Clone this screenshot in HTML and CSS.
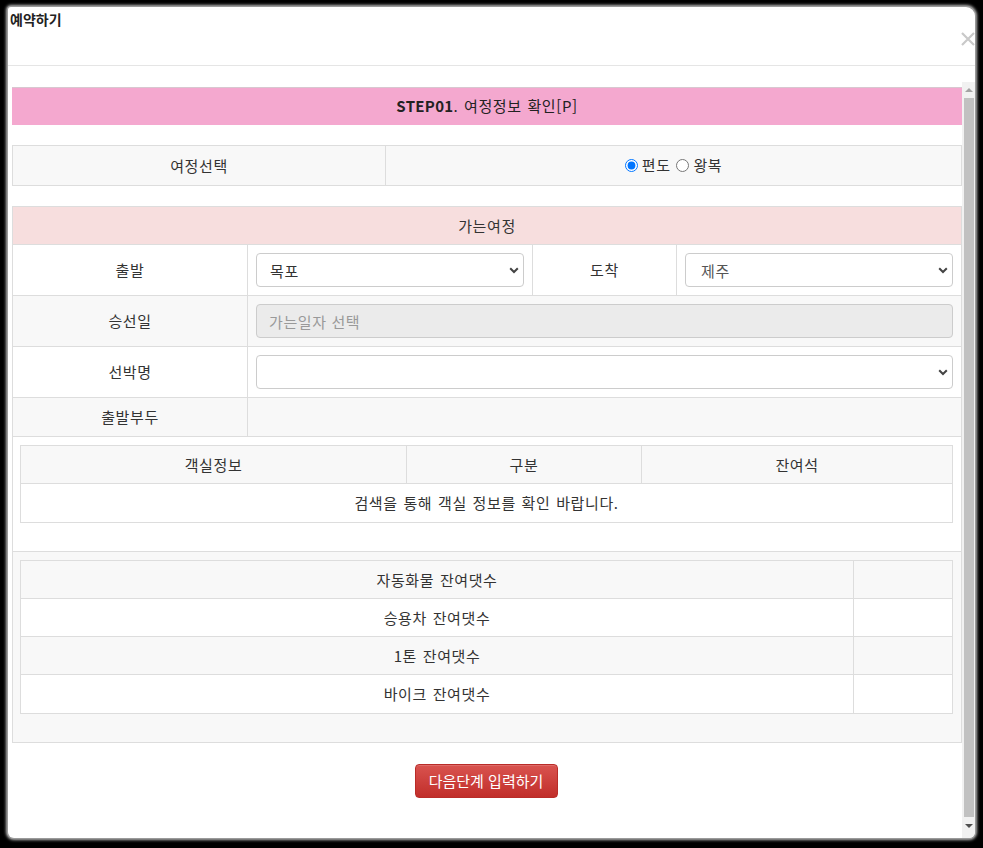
FILE: index.html
```html
<!DOCTYPE html>
<html lang="ko">
<head>
<meta charset="utf-8">
<title>예약하기</title>
<link rel="stylesheet" href="styles.css">
</head>
<body>
<div class="modal">
  <div class="modal-header">
    <h4 class="modal-title">예약하기</h4>
    <span class="close" aria-label="닫기">
      <svg width="16" height="16" viewBox="0 0 16 16"><path d="M2 2 L14 14 M14 2 L2 14" stroke="#c9c9c9" stroke-width="2.2" fill="none"/></svg>
    </span>
  </div>
  <div class="modal-body">
    <div class="content">
      <div class="step"><b>STEP01</b>. 여정정보 확인[P]</div>

      <table class="tbl tbl-type">
        <colgroup><col class="c-type-l"><col></colgroup>
        <tr>
          <td>여정선택</td>
          <td>
            <label class="radio"><input type="radio" name="trip" checked> 편도</label>
            <label class="radio"><input type="radio" name="trip"> 왕복</label>
          </td>
        </tr>
      </table>

      <table class="tbl tbl-main">
        <colgroup><col class="c1"><col class="c2"><col class="c3"><col class="c4"></colgroup>
        <tr class="r-head"><td colspan="4">가는여정</td></tr>
        <tr class="r-form">
          <td>출발</td>
          <td class="fcell"><span class="sel"><select><option>목포</option></select><svg class="chev" width="10" height="7" viewBox="0 0 10 7"><path d="M1.2 1.2 L5 5 L8.8 1.2" stroke="#444" stroke-width="2" fill="none"/></svg></span></td>
          <td>도착</td>
          <td class="fcell"><span class="sel"><select class="sel-gray"><option>제주</option></select><svg class="chev" width="10" height="7" viewBox="0 0 10 7"><path d="M1.2 1.2 L5 5 L8.8 1.2" stroke="#444" stroke-width="2" fill="none"/></svg></span></td>
        </tr>
        <tr class="r-form alt">
          <td>승선일</td>
          <td colspan="3" class="fcell"><input class="inp" type="text" placeholder="가는일자 선택" disabled></td>
        </tr>
        <tr class="r-form">
          <td>선박명</td>
          <td colspan="3" class="fcell"><span class="sel"><select><option></option></select><svg class="chev" width="10" height="7" viewBox="0 0 10 7"><path d="M1.2 1.2 L5 5 L8.8 1.2" stroke="#444" stroke-width="2" fill="none"/></svg></span></td>
        </tr>
        <tr class="r-port alt">
          <td>출발부두</td>
          <td colspan="3"></td>
        </tr>
        <tr class="r-nest">
          <td colspan="4" class="nest">
            <table class="tbl tbl-room">
              <colgroup><col class="n1"><col class="n2"><col></colgroup>
              <tr class="alt"><td>객실정보</td><td>구분</td><td>잔여석</td></tr>
              <tr class="r-msg"><td colspan="3">검색을 통해 객실 정보를 확인 바랍니다.</td></tr>
            </table>
          </td>
        </tr>
        <tr class="r-nest alt">
          <td colspan="4" class="nest">
            <table class="tbl tbl-car">
              <colgroup><col><col class="v1"></colgroup>
              <tr class="alt"><td>자동화물 잔여댓수</td><td></td></tr>
              <tr class="wh"><td>승용차 잔여댓수</td><td></td></tr>
              <tr class="alt"><td>1톤 잔여댓수</td><td></td></tr>
              <tr class="wh last"><td>바이크 잔여댓수</td><td></td></tr>
            </table>
          </td>
        </tr>
      </table>

      <div class="actions">
        <button class="btn-next" type="button">다음단계 입력하기</button>
      </div>
    </div>
    <div class="scrollbar">
      <span class="sb-up"></span>
      <span class="sb-thumb"></span>
      <span class="sb-down"></span>
    </div>
  </div>
</div>
</body>
</html>
```
FILE: styles.css
```css
* { box-sizing: border-box; }
html, body { margin: 0; }
body {
  background: #000;
  height: 848px;
  padding: 7px 8px 0 8px;
  font-family: "Noto Sans CJK KR", "Noto Sans", sans-serif;
  font-size: 15px;
  letter-spacing: 0.6px;
  word-spacing: 1px;
  color: #333;
  overflow: hidden;
}
.modal {
  width: 967px;
  height: 831px;
  background: #fff;
  border-radius: 3px 9px 6px 6px;
  box-shadow: 0 0 0 1px #9a9a9a, 0 0 3px 2px #bdbdbd;
  display: flex;
  flex-direction: column;
  overflow: hidden;
}
.modal-header {
  position: relative;
  height: 59px;
  border-bottom: 1px solid #e5e5e5;
  padding: 3px 2px 0 2px;
}
.modal-title {
  margin: 0;
  font-size: 14px;
  letter-spacing: 0;
  font-weight: bold;
  line-height: 18px;
  color: #222;
}
.close {
  position: absolute;
  right: -1px;
  top: 24px;
  width: 16px;
  height: 16px;
}
.close svg { display: block; }
.modal-body {
  flex: 1;
  display: flex;
  padding: 16px 0 0 4px;
  min-height: 0;
}
.content {
  width: 950px;
  padding-top: 5px;
}
.step {
  height: 38px;
  background: #f4a8cf;
  border-top: 1px solid #d8c7d0;
  text-align: center;
  line-height: 36px;
  color: #222;
}
.step b { font-weight: bold; letter-spacing: 0.3px; }

.tbl {
  width: 100%;
  border-collapse: collapse;
  table-layout: fixed;
}
.tbl td {
  border: 1px solid #ddd;
  text-align: center;
  vertical-align: middle;
  padding: 0 8px;
  line-height: 20px;
}
.alt { background: #f8f8f8; }
.wh { background: #fff; }

.tbl-type { margin-top: 20px; background: #f8f8f8; }
.tbl-type tr { height: 40px; }
.c-type-l { width: 373px; }
.radio { display: inline-flex; align-items: center; gap: 2px; }
.radio input { margin: 0 2px 0 0; width: 13px; height: 13px; }

.tbl-main { margin-top: 20px; }
.c1 { width: 235px; }
.c2 { width: 285px; }
.c3 { width: 144px; }
.r-head { height: 38px; background: #f7dede; }
.r-form { height: 51px; }
.r-port { height: 39px; }
.fcell { padding: 0 8px 0 8px !important; }

.sel { position: relative; display: block; }
.sel select {
  -webkit-appearance: none;
  appearance: none;
  display: block;
  width: 100%;
  height: 34px;
  border: 1px solid #ccc;
  border-radius: 4px;
  background: #fff;
  padding: 0 30px 0 13px;
  font-family: inherit;
  font-size: 15px;
  letter-spacing: 0.6px;
  color: #333;
}
.sel select.sel-gray { color: #555; padding-left: 15px; }
.chev { position: absolute; right: 5px; top: 14px; pointer-events: none; }

.inp {
  display: block;
  width: 100%;
  height: 34px;
  border: 1px solid #ccc;
  border-radius: 4px;
  background: #ebebeb;
  padding: 0 12px;
  font-family: inherit;
  font-size: 15px;
  letter-spacing: 0.6px;
}
.inp::placeholder { color: #999; }

.nest { padding: 8px 8px 28px 7px !important; }
.tbl-room tr { height: 38px; }
.tbl-room .r-msg { height: 39px; }
.n1 { width: 386px; }
.n2 { width: 235px; }
.tbl-car tr { height: 38px; }
.tbl-car tr.last { height: 39px; }
.v1 { width: 99px; }

.actions {
  display: flex;
  justify-content: center;
  padding-top: 21px;
}
.btn-next {
  width: 143px;
  height: 34px;
  margin-left: -2px;
  border: 1px solid #b92c28;
  border-radius: 4px;
  background: linear-gradient(to bottom, #d9534f 0%, #c12e2a 100%);
  color: #fff;
  font-family: inherit;
  font-size: 15px;
  letter-spacing: 0;
  line-height: 20px;
  padding: 0;
  box-shadow: inset 0 1px 0 rgba(255,255,255,.15);
}

.scrollbar {
  width: 13px;
  background: #f1f1f1;
  display: flex;
  flex-direction: column;
  align-items: center;
  padding-bottom: 4px;
}
.sb-up, .sb-down {
  height: 15px;
  width: 13px;
  position: relative;
  flex: none;
}
.sb-up::after {
  content: "";
  position: absolute;
  left: 3px; top: 6px;
  border-left: 4px solid transparent;
  border-right: 4px solid transparent;
  border-bottom: 4px solid #a3a3a3;
}
.sb-down::after {
  content: "";
  position: absolute;
  left: 3px; top: 5px;
  border-left: 4px solid transparent;
  border-right: 4px solid transparent;
  border-top: 4px solid #505050;
}
.sb-thumb {
  flex: 1;
  width: 10px;
  background: #c1c1c1;
  margin: 1px 0 2px;
}
```
